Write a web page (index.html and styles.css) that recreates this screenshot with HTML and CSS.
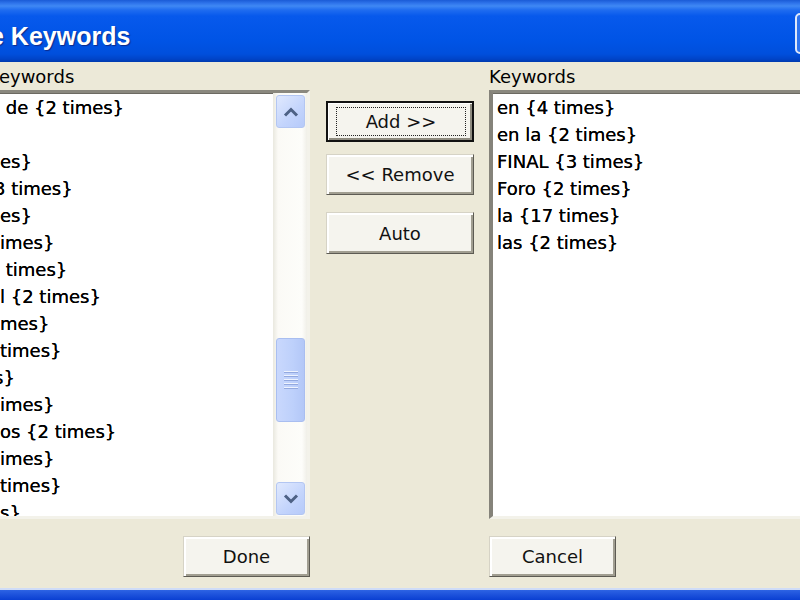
FILE: index.html
```html
<!DOCTYPE html>
<html lang="en">
<head>
    <meta charset="UTF-8">
    <title>Keywords</title>
    <link rel="stylesheet" href="styles.css">
</head>
<body>
    <div class="window">
        <div class="titlebar">
            <span class="title">e Keywords</span>
            <span class="close-btn"></span>
        </div>

        <div class="client">
            <div class="label label-cut">Keywords</div>
            <div></div>
            <div class="label">Keywords</div>

            <!-- available keywords -->
            <div class="listbox left-list">
                <ul class="items">
                    <li> de {2 times}</li>
                    <li>&nbsp;</li>
                    <li>es}</li>
                    <li class="cut">3 times}</li>
                    <li>es}</li>
                    <li>imes}</li>
                    <li> times}</li>
                    <li>l {2 times}</li>
                    <li>mes}</li>
                    <li>times}</li>
                    <li class="cut">s}</li>
                    <li>imes}</li>
                    <li>os {2 times}</li>
                    <li>imes}</li>
                    <li>times}</li>
                    <li>s}</li>
                </ul>
                <div class="scrollbar">
                    <div class="scroll-btn">
                        <svg width="16" height="10" viewBox="0 0 16 10"><polyline points="2,8.5 8,2.5 14,8.5" fill="none" stroke="#4d6185" stroke-width="3"/></svg>
                    </div>
                    <div class="scroll-gap"></div>
                    <div class="thumb">
                        <span class="grip"></span>
                        <span class="grip"></span>
                        <span class="grip"></span>
                        <span class="grip"></span>
                        <span class="grip"></span>
                    </div>
                    <div class="scroll-fill"></div>
                    <div class="scroll-btn">
                        <svg width="16" height="10" viewBox="0 0 16 10"><polyline points="2,1.5 8,7.5 14,1.5" fill="none" stroke="#4d6185" stroke-width="3"/></svg>
                    </div>
                </div>
            </div>

            <div class="actions">
                <button class="btn default"><span class="focus">Add &gt;&gt;</span></button>
                <button class="btn remove-btn">&lt;&lt; Remove</button>
                <button class="btn auto-btn">Auto</button>
            </div>

            <!-- chosen keywords -->
            <div class="listbox right-list">
                <ul class="items">
                    <li>en {4 times}</li>
                    <li>en la {2 times}</li>
                    <li>FINAL {3 times}</li>
                    <li>Foro {2 times}</li>
                    <li>la {17 times}</li>
                    <li>las {2 times}</li>
                </ul>
            </div>

            <div class="footer footer-left"><button class="btn small-btn">Done</button></div>
            <div class="footer"></div>
            <div class="footer"><button class="btn small-btn">Cancel</button></div>
        </div>

        <div class="frame-bottom"></div>
    </div>
</body>
</html>
```

FILE: styles.css
```css
body {
    margin: 0;
    background: #ece9d8;
    font-family: "DejaVu Sans", Verdana, sans-serif;
    font-size: 18px;
    color: #000;
    overflow: hidden;
}
.window {
    width: 800px;
    height: 600px;
    display: flex;
    flex-direction: column;
    overflow: hidden;
}
.titlebar {
    height: 62px;
    flex: none;
    display: flex;
    align-items: flex-start;
    background: linear-gradient(#1a5bd6 0, #2d72ea 3px, #3f88f4 6px, #1f6cf0 10px, #0759ec 16px, #0054e6 40px, #004fdc 54px, #0044c8 59px, #003aae 62px);
}
.title {
    margin-top: 21px;
    line-height: 30px;
    text-indent: -10px;
    font-family: "Liberation Sans", Arial, sans-serif;
    font-weight: bold;
    font-size: 25px;
    color: #fff;
    text-shadow: 1px 1px 1px #0c2a8a;
    white-space: pre;
}
.close-btn {
    margin-left: auto;
    margin-top: 13px;
    margin-right: -35px;
    width: 40px;
    height: 41px;
    box-sizing: border-box;
    border: 2px solid #dfe8fb;
    border-radius: 5px;
    background: #2f74ee;
}
.client {
    flex: 1;
    display: grid;
    grid-template-columns: 310px 179px 1fr;
    grid-template-rows: 24px 429px 58px;
    padding-top: 4px;
}
.label {
    line-height: 22px;
    white-space: nowrap;
}
.label-cut {
    text-indent: -12px;
    overflow: hidden;
}
.listbox {
    display: flex;
    background: #fff;
    border-top: 3px solid #8a887e;
    border-bottom: 3px solid #f3f2ea;
    box-shadow: inset 0 1px 0 #6c6a62;
    overflow: hidden;
}
.left-list {
    border-right: 3px solid #f3f2ea;
}
.right-list {
    border-left: 4px solid #85837a;
    margin-right: -20px;
}
.items {
    flex: 1;
    list-style: none;
    margin: 0;
    padding: 1px 0 0 0;
    line-height: 27px;
    overflow: hidden;
}
.items li {
    white-space: pre;
    text-shadow: 0 0 0.4px #000;
}
.right-list .items {
    padding-left: 4px;
}
.cut {
    text-indent: -6px;
}
.scrollbar {
    width: 34px;
    flex: none;
    box-sizing: border-box;
    padding: 2px 2px 1px 3px;
    display: flex;
    flex-direction: column;
    background: linear-gradient(90deg, #e9e8df, #fbfaf6 15%, #fdfdfa 85%, #f0efe8);
}
.scroll-btn {
    height: 33px;
    flex: none;
    box-sizing: border-box;
    display: flex;
    align-items: center;
    justify-content: center;
    border: 1px solid #b3c6f2;
    border-radius: 3px;
    background: linear-gradient(135deg, #e0e9fe, #c3d4fc 60%, #b6cafa);
}
.scroll-gap {
    height: 210px;
    flex: none;
}
.thumb {
    height: 84px;
    flex: none;
    box-sizing: border-box;
    display: flex;
    flex-direction: column;
    align-items: center;
    justify-content: center;
    gap: 2px;
    border: 1px solid #a9bef0;
    border-radius: 3px;
    background: linear-gradient(90deg, #c9d8fd, #bdd0fb 60%, #b3c7f7);
}
.grip {
    width: 14px;
    height: 1px;
    background: #eef3fe;
    border-bottom: 1px solid #93a9df;
}
.scroll-fill {
    flex: 1;
}
.actions {
    display: flex;
    flex-direction: column;
    padding: 11px 0 0 16px;
}
.btn {
    font-family: "DejaVu Sans", Verdana, sans-serif;
    font-size: 18px;
    color: #111;
    width: 148px;
    height: 41px;
    padding: 0;
    box-sizing: border-box;
    background: #f5f4ee;
    border: 1px solid;
    border-color: #d6d3c6 #5d5b53 #5d5b53 #d6d3c6;
    box-shadow: inset 2px 2px 0 #fff, inset -2px -2px 0 #a19e91;
    cursor: pointer;
}
.btn.default {
    border: 2px solid #111;
    box-shadow: inset 1px 1px 0 #fff, inset -2px -2px 0 #8f8c80;
    display: flex;
    align-items: center;
}
.focus {
    flex: 1;
    height: 27px;
    margin: 0 6px 1px 8px;
    border: 1px dotted #222;
    display: flex;
    align-items: center;
    justify-content: center;
}
.remove-btn {
    margin-top: 12px;
}
.auto-btn {
    margin-top: 17px;
    height: 42px;
}
.footer {
    padding-top: 17px;
}
.footer-left {
    display: flex;
    justify-content: flex-end;
}
.small-btn {
    width: 127px;
}
.frame-bottom {
    height: 12px;
    flex: none;
    background: linear-gradient(#cfdcf7 0, #cfdcf7 2px, #2d63e4 2px, #0a3fd2 100%);
}
```
